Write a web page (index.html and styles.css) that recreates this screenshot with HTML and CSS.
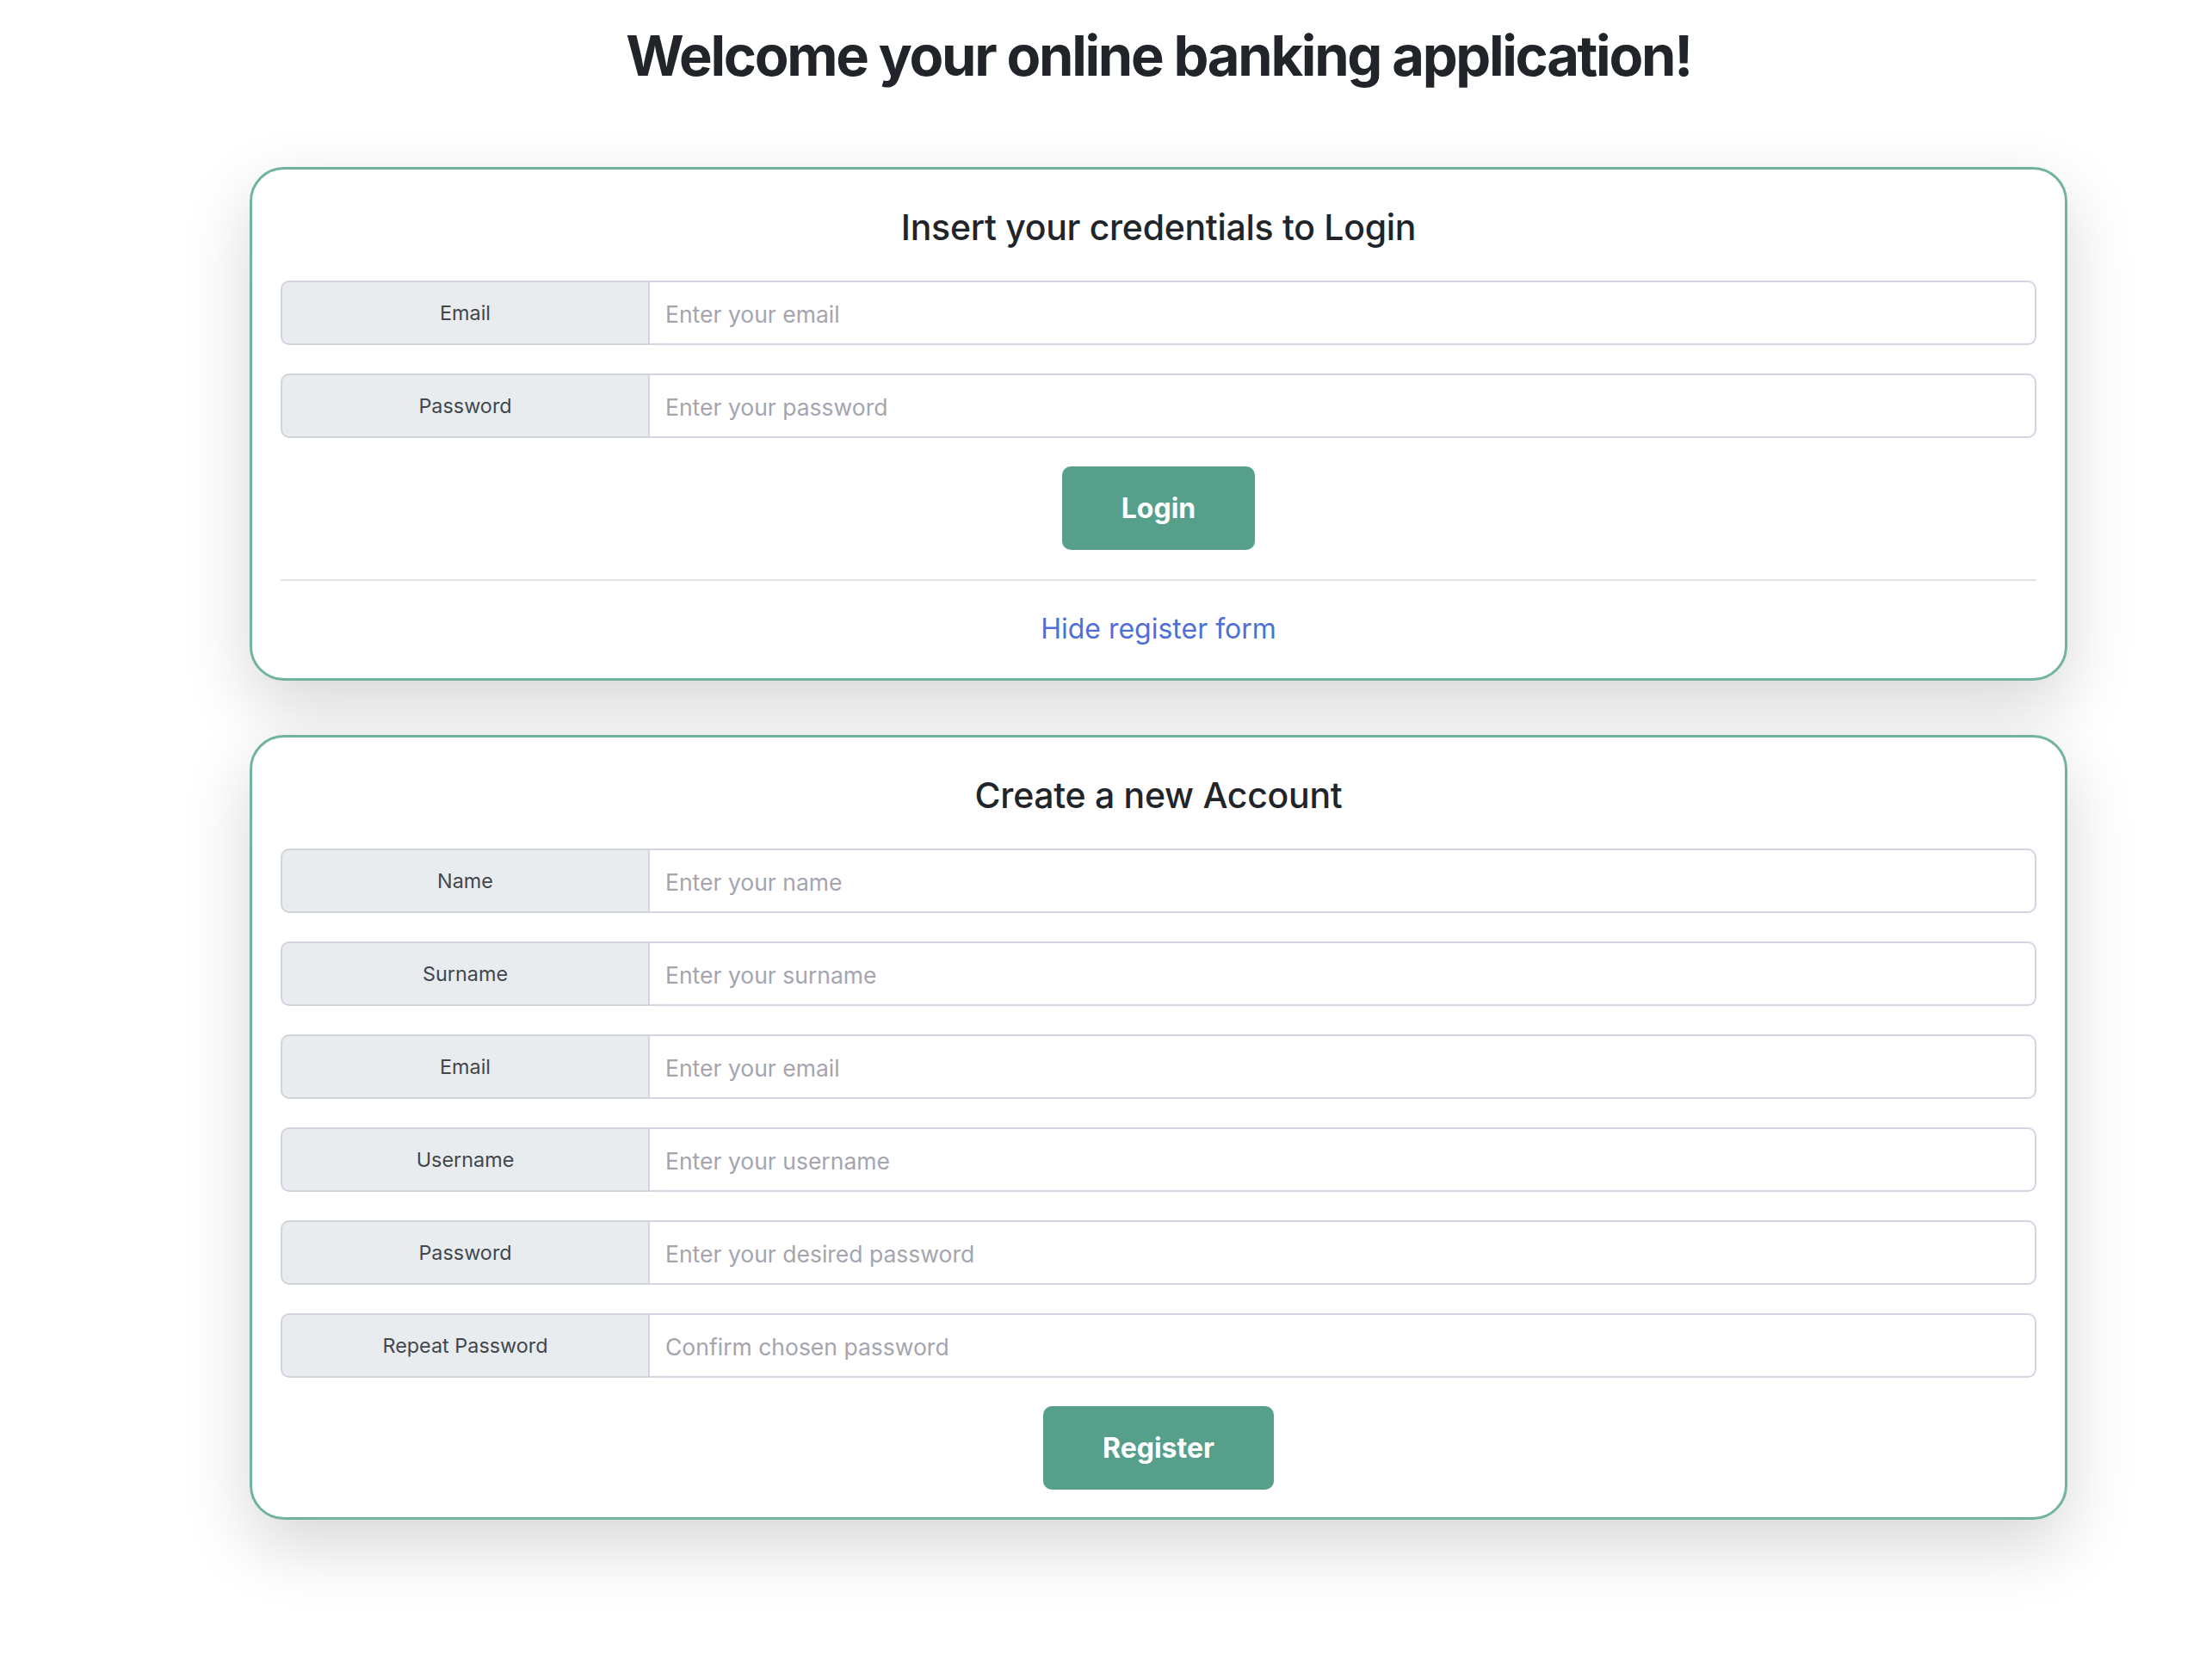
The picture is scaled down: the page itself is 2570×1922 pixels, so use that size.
FILE: index.html
```html
<!DOCTYPE html>
<html lang="en">
<head>
<meta charset="utf-8">
<title>Online Banking</title>
<link rel="stylesheet" href="styles.css">
</head>
<body>
<main class="page">
  <h1 class="page-title">Welcome your online banking application!</h1>

  <section class="card">
    <h2 class="card-title">Insert your credentials to Login</h2>
    <div class="field">
      <label class="field-label" for="login-email">Email</label>
      <input class="field-input" id="login-email" type="email" placeholder="Enter your email">
    </div>
    <div class="field">
      <label class="field-label" for="login-pass">Password</label>
      <input class="field-input" id="login-pass" type="password" placeholder="Enter your password">
    </div>
    <div class="actions">
      <button class="btn btn-login" type="button">Login</button>
    </div>
    <hr class="divider">
    <div class="toggle-row">
      <a class="toggle-link" href="#">Hide register form</a>
    </div>
  </section>

  <section class="card card-register">
    <h2 class="card-title">Create a new Account</h2>
    <div class="field">
      <label class="field-label" for="r-name">Name</label>
      <input class="field-input" id="r-name" type="text" placeholder="Enter your name">
    </div>
    <div class="field">
      <label class="field-label" for="r-surname">Surname</label>
      <input class="field-input" id="r-surname" type="text" placeholder="Enter your surname">
    </div>
    <div class="field">
      <label class="field-label" for="r-email">Email</label>
      <input class="field-input" id="r-email" type="email" placeholder="Enter your email">
    </div>
    <div class="field">
      <label class="field-label" for="r-user">Username</label>
      <input class="field-input" id="r-user" type="text" placeholder="Enter your username">
    </div>
    <div class="field">
      <label class="field-label" for="r-pass">Password</label>
      <input class="field-input" id="r-pass" type="password" placeholder="Enter your desired password">
    </div>
    <div class="field">
      <label class="field-label" for="r-pass2">Repeat Password</label>
      <input class="field-input" id="r-pass2" type="password" placeholder="Confirm chosen password">
    </div>
    <div class="actions">
      <button class="btn btn-register" type="button">Register</button>
    </div>
  </section>
</main>
</body>
</html>
```

FILE: styles.css
```css
* { box-sizing: border-box; }

html, body {
  margin: 0;
  padding: 0;
  background: #ffffff;
}

body {
  font-family: Inter, "Noto Sans", "Liberation Sans", sans-serif;
  color: #212529;
}

.page {
  width: 2112px;
  margin-left: 290px;
  padding-top: 26px;
  padding-bottom: 160px;
}

.page-title {
  margin: 0 0 90px;
  text-align: center;
  font-size: 65px;
  line-height: 78px;
  font-weight: 700;
  letter-spacing: -2.3px;
  color: #212529;
}

.card {
  background: #fff;
  border: 3px solid #72b3a0;
  border-radius: 40px;
  padding: 43px 33px 28px;
  box-shadow: 0 30px 80px rgba(0, 0, 0, 0.16);
}

.card + .card {
  margin-top: 63px;
}

.card-register {
  padding-bottom: 32px;
}

.card-title {
  margin: 0 0 37px;
  text-align: center;
  font-size: 41px;
  line-height: 49px;
  font-weight: 500;
  letter-spacing: -0.3px;
  color: #212529;
}

.field {
  display: flex;
  height: 75px;
  margin-bottom: 33px;
}

.field-label {
  flex: 0 0 428px;
  display: flex;
  align-items: center;
  justify-content: center;
  background: #e9ecef;
  border: 2px solid #d2d4dc;
  border-right-width: 1px;
  border-radius: 10px 0 0 10px;
  font-size: 23.4px;
  color: #43474d;
}

.field-input {
  flex: 1 1 auto;
  min-width: 0;
  height: 100%;
  border: 2px solid #d3d5e2;
  border-left-width: 1px;
  border-radius: 0 10px 10px 0;
  padding: 2px 18px 0;
  font-family: Inter, "Noto Sans", "Liberation Sans", sans-serif;
  font-size: 26.5px;
  color: #212529;
  background: #fff;
  outline: none;
}

.field-input::placeholder {
  color: #a4a5af;
}

.actions {
  display: flex;
  justify-content: center;
}

.btn {
  height: 97px;
  padding: 0 69px;
  border: none;
  border-radius: 10px;
  background: #559f8b;
  color: #fff;
  font-family: Inter, "Noto Sans", "Liberation Sans", sans-serif;
  font-size: 32px;
  font-weight: 700;
  cursor: pointer;
}

.divider {
  margin: 34px 0 32px;
  border: none;
  border-top: 2px solid #e3e3e3;
  height: 0;
}

.toggle-row {
  text-align: center;
  line-height: 48px;
}

.toggle-link {
  font-size: 32px;
  color: #4f6fd6;
  text-decoration: none;
}
```
